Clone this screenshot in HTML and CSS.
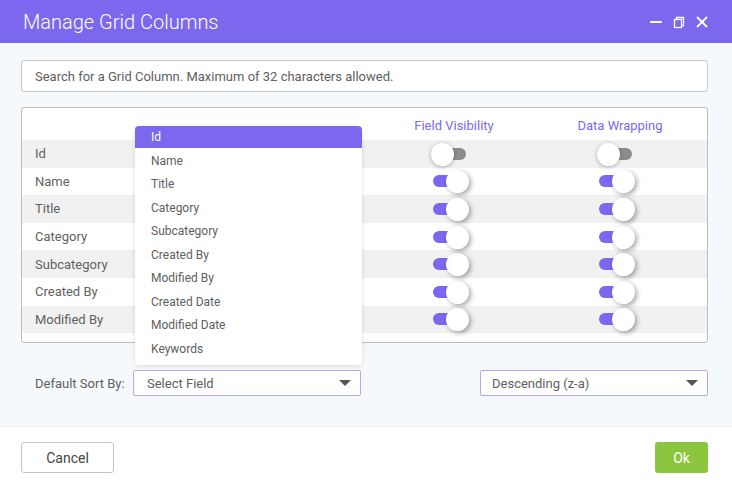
FILE: index.html
```html
<!DOCTYPE html>
<html>
<head>
<meta charset="utf-8">
<link rel="stylesheet" href="styles.css">
</head>
<body>
<div class="dialog">
  <div class="titlebar">
    <div class="title">Manage Grid Columns</div>
    <div class="win-icons">
      <svg width="14" height="14" viewBox="0 0 14 14"><line x1="1" y1="7" x2="13" y2="7" stroke="#fff" stroke-width="2"/></svg>
      <svg width="14" height="14" viewBox="0 0 14 14" fill="none" stroke="#fff" stroke-width="1.3"><rect x="2.5" y="4.5" width="7" height="8"/><path d="M4.5 4.5V2.5h7v8h-2"/></svg>
      <svg width="14" height="14" viewBox="0 0 14 14" stroke="#fff" stroke-width="1.8"><line x1="2" y1="2" x2="12" y2="12"/><line x1="12" y1="2" x2="2" y2="12"/></svg>
    </div>
  </div>
  <div class="content">
    <div class="search">Search for a Grid Column. Maximum of 32 characters allowed.</div>
    <div class="grid">
      <div class="row head">
        <div class="cell label"></div>
        <div class="cell center hcol">Field Visibility</div>
        <div class="cell center hcol">Data Wrapping</div>
      </div>
      <div class="row alt">
        <div class="cell label">Id</div>
        <div class="cell center"><span class="toggle"><span class="knob"></span></span></div>
        <div class="cell center"><span class="toggle"><span class="knob"></span></span></div>
      </div>
      <div class="row">
        <div class="cell label">Name</div>
        <div class="cell center"><span class="toggle on"><span class="knob"></span></span></div>
        <div class="cell center"><span class="toggle on"><span class="knob"></span></span></div>
      </div>
      <div class="row alt">
        <div class="cell label">Title</div>
        <div class="cell center"><span class="toggle on"><span class="knob"></span></span></div>
        <div class="cell center"><span class="toggle on"><span class="knob"></span></span></div>
      </div>
      <div class="row">
        <div class="cell label">Category</div>
        <div class="cell center"><span class="toggle on"><span class="knob"></span></span></div>
        <div class="cell center"><span class="toggle on"><span class="knob"></span></span></div>
      </div>
      <div class="row alt">
        <div class="cell label">Subcategory</div>
        <div class="cell center"><span class="toggle on"><span class="knob"></span></span></div>
        <div class="cell center"><span class="toggle on"><span class="knob"></span></span></div>
      </div>
      <div class="row">
        <div class="cell label">Created By</div>
        <div class="cell center"><span class="toggle on"><span class="knob"></span></span></div>
        <div class="cell center"><span class="toggle on"><span class="knob"></span></span></div>
      </div>
      <div class="row alt">
        <div class="cell label">Modified By</div>
        <div class="cell center"><span class="toggle on"><span class="knob"></span></span></div>
        <div class="cell center"><span class="toggle on"><span class="knob"></span></span></div>
      </div>
    </div>
    <div class="sort-row">
      <div class="sort-label">Default Sort By:</div>
      <div class="select-wrap">
        <div class="select">Select Field<span class="caret"></span></div>
        <ul class="menu">
          <li class="active">Id</li>
          <li>Name</li>
          <li>Title</li>
          <li>Category</li>
          <li>Subcategory</li>
          <li>Created By</li>
          <li>Modified By</li>
          <li>Created Date</li>
          <li>Modified Date</li>
          <li>Keywords</li>
        </ul>
      </div>
      <div class="spacer"></div>
      <div class="select second">Descending (z-a)<span class="caret"></span></div>
    </div>
  </div>
  <div class="footer">
    <button class="btn cancel">Cancel</button>
    <button class="btn ok">Ok</button>
  </div>
</div>
</body>
</html>
```
FILE: styles.css
```css
* { box-sizing: border-box; }
html, body { margin: 0; padding: 0; }
body {
  font-family: Roboto, "Liberation Sans", sans-serif;
  color: #606060;
  background: #fff;
}
.dialog {
  width: 732px;
  height: 488px;
  display: flex;
  flex-direction: column;
}
.titlebar {
  height: 43px;
  flex: none;
  background: #7b68ee;
  display: flex;
  align-items: center;
  justify-content: space-between;
  padding: 0 22px 0 23px;
}
.title {
  color: #fff;
  font-size: 20px;
  font-weight: 300;
}
.win-icons {
  display: flex;
  gap: 9px;
  align-items: center;
  margin-right: 1px;
}
.win-icons svg { display: block; }
.content {
  flex: 1;
  background: #f6f9fc;
  padding: 17px 24px 0 21px;
}
.search {
  height: 32px;
  background: #fff;
  border: 1px solid #c9c9c9;
  border-radius: 3px;
  font-size: 13px;
  color: #606060;
  display: flex;
  align-items: center;
  padding-left: 13px;
}
.grid {
  margin-top: 15px;
  height: 236px;
  background: #fff;
  border: 1px solid #bdbdbd;
  border-radius: 3px;
}
.row {
  display: grid;
  grid-template-columns: 349px 166px 166px;
  height: 27.6px;
  align-items: center;
}
.row.head { height: 32px; }
.row.alt { background: #f1f1f1; }
.cell.label {
  padding-left: 13px;
  font-size: 13px;
  color: #626262;
}
.cell.center {
  display: flex;
  justify-content: center;
}
.hcol {
  color: #7b68ee;
  font-size: 13px;
  padding-top: 2px;
}
.toggle {
  position: relative;
  display: block;
  width: 33px;
  height: 12px;
  border-radius: 6px;
  background: #8c8c8c;
  margin-left: -9px;
}
.toggle.on { background: #7b68ee; }
.knob {
  position: absolute;
  top: -5px;
  left: -2px;
  width: 23px;
  height: 23px;
  border-radius: 50%;
  background: #fff;
  box-shadow: 0 1px 4px rgba(0,0,0,0.3);
}
.toggle.on .knob {
  left: 13px;
  box-shadow: 2px 2px 5px rgba(0,0,0,0.35);
}
.sort-row {
  margin-top: 27px;
  display: flex;
  align-items: center;
}
.sort-label {
  width: 112px;
  padding-left: 14px;
  font-size: 13px;
  color: #606060;
}
.select-wrap { position: relative; }
.select {
  position: relative;
  width: 228px;
  height: 26px;
  background: #fff;
  border: 1px solid #b3a8f3;
  border-radius: 2px;
  font-size: 13px;
  color: #606060;
  display: flex;
  align-items: center;
  padding-left: 13px;
}
.select.second { padding-left: 11px; }
.caret {
  position: absolute;
  right: 9px;
  top: 9px;
  width: 0;
  height: 0;
  border-left: 6px solid transparent;
  border-right: 6px solid transparent;
  border-top: 6px solid #555;
}
.spacer { flex: 1; }
.menu {
  position: absolute;
  left: 2px;
  bottom: 31px;
  width: 227px;
  margin: 0;
  padding: 0 0 4px 0;
  list-style: none;
  background: #fff;
  border-radius: 4px;
  box-shadow: 0 1px 5px rgba(0,0,0,0.12);
  overflow: hidden;
}
.menu li {
  height: 23.5px;
  line-height: 23.5px;
  padding-left: 16px;
  font-size: 12px;
  color: #606060;
}
.menu li.active {
  background: #7b68ee;
  color: #fff;
  height: 22px;
  line-height: 22px;
  margin-bottom: 1.5px;
}
.footer {
  flex: none;
  height: 62px;
  background: #fff;
  border-top: 1px solid #eef1f4;
  display: flex;
  justify-content: space-between;
  align-items: flex-start;
  padding: 15px 24px 0 21px;
}
.btn {
  height: 31px;
  font-family: Roboto, "Liberation Sans", sans-serif;
  font-size: 14px;
  border-radius: 3px;
  cursor: pointer;
}
.cancel {
  width: 93px;
  background: #fff;
  border: 1px solid #c4c4c4;
  color: #444;
}
.ok {
  width: 53px;
  background: #8cc63f;
  border: none;
  color: #fff;
}
```
